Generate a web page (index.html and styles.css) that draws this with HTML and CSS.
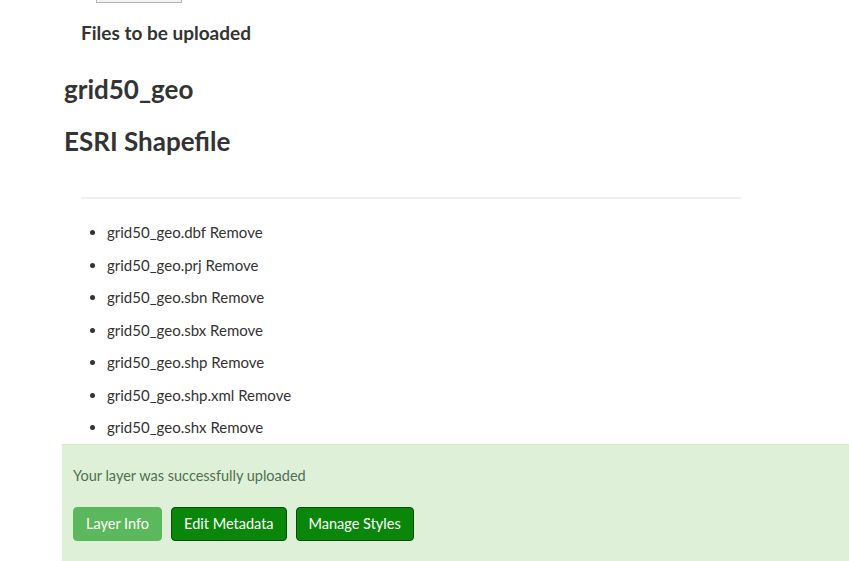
FILE: index.html
```html
<!DOCTYPE html>
<html lang="en">
<head>
    <meta charset="UTF-8">
    <meta name="viewport" content="width=device-width, initial-scale=1.0">
    <title>Upload</title>
    <link rel="stylesheet" href="styles.css">
</head>
<body>
    <div class="file-input"></div>
    <h4 class="files-title">Files to be uploaded</h4>

    <h3 class="layer-name">grid50_geo</h3>
    <h3 class="layer-type">ESRI Shapefile</h3>

    <hr class="divider">

    <ul class="file-list">
        <li>grid50_geo.dbf <a href="#">Remove</a></li>
        <li>grid50_geo.prj <a href="#">Remove</a></li>
        <li>grid50_geo.sbn <a href="#">Remove</a></li>
        <li>grid50_geo.sbx <a href="#">Remove</a></li>
        <li>grid50_geo.shp <a href="#">Remove</a></li>
        <li>grid50_geo.shp.xml <a href="#">Remove</a></li>
        <li>grid50_geo.shx <a href="#">Remove</a></li>
    </ul>

    <div class="alert-success">
        <p>Your layer was successfully uploaded</p>
        <div class="actions">
            <a href="#" class="btn btn-light">Layer Info</a>
            <a href="#" class="btn btn-dark">Edit Metadata</a>
            <a href="#" class="btn btn-dark">Manage Styles</a>
        </div>
    </div>
</body>
</html>
```

FILE: styles.css
```css
body {
    margin: 0;
    font-family: Lato, "Open Sans", sans-serif;
    color: #333;
    background: #fff;
    overflow: hidden;
}

.file-input {
    margin-left: 96px;
    width: 84px;
    height: 2px;
    border: 1px solid #b5b5b5;
    border-top: none;
    background: #f2f2f2;
}

.files-title {
    margin: 19px 0 0 81px;
    font-size: 19px;
    font-weight: bold;
    line-height: 22px;
}

h3 {
    margin: 0 0 0 64px;
    font-size: 26px;
    font-weight: bold;
    line-height: 30px;
}

.layer-name {
    margin-top: 30px;
}

.layer-type {
    margin-top: 22px;
}

.divider {
    margin: 41px 0 0 81px;
    width: 660px;
    border: 0;
    border-top: 2px solid #f0f0f0;
}

.file-list {
    margin: 17px 0 0 81px;
    padding-left: 26px;
    font-size: 15px;
}

.file-list li {
    line-height: 32.5px;
}

.file-list a {
    color: #333;
    text-decoration: none;
}

.alert-success {
    margin: 0 0 0 62px;
    width: 820px;
    padding: 22px 11px 20px;
    background-color: #dff0d8;
    border-top: 1px solid #d6e9c6;
}

.alert-success p {
    margin: 0 0 23px;
    font-size: 14.5px;
    color: #4f6f52;
}

.actions {
    display: flex;
    gap: 9px;
}

.btn {
    display: inline-block;
    padding: 0 12px;
    height: 34px;
    line-height: 32px;
    font-size: 14.5px;
    color: #fff;
    text-decoration: none;
    border-radius: 4px;
    box-sizing: border-box;
}

.btn-light {
    background-color: #5cb85c;
    border: 1px solid #5cb85c;
}

.btn-dark {
    background-color: #0a870a;
    border: 1px solid #064d06;
}
```
